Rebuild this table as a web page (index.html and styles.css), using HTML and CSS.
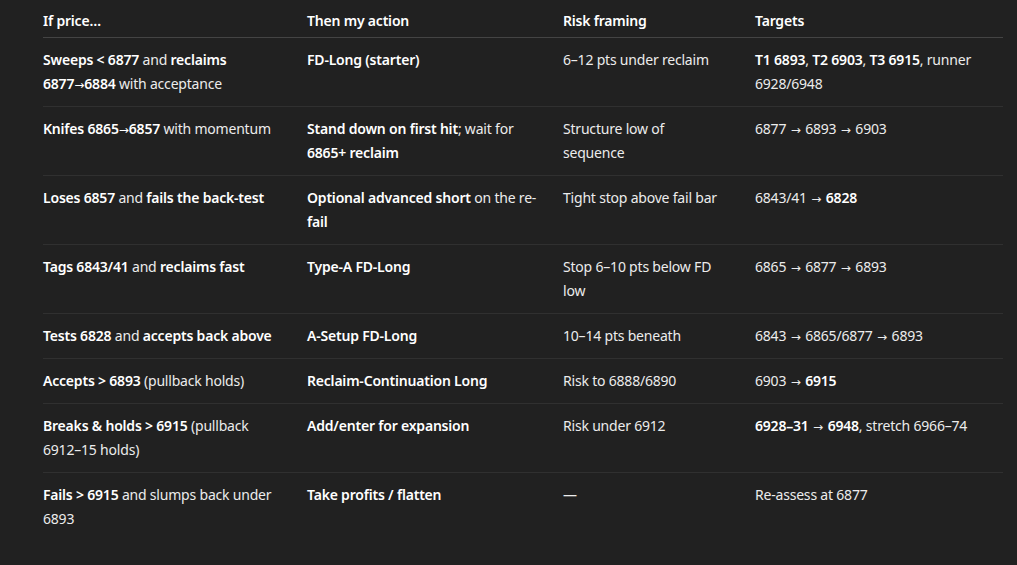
FILE: index.html
```html
<!DOCTYPE html>
<html lang="en">
<head>
<meta charset="utf-8">
<title>Price action plan</title>
<link rel="stylesheet" href="styles.css">
</head>
<body>
<div class="wrap">
<table class="plan">
<colgroup>
<col class="c1"><col class="c2"><col class="c3"><col class="c4">
</colgroup>
<thead>
<tr><th>If price…</th><th>Then my action</th><th>Risk framing</th><th>Targets</th></tr>
</thead>
<tbody>
<tr>
<td><strong>Sweeps &lt; 6877</strong> and <strong>reclaims 6877<span class="arr">→</span>6884</strong> with acceptance</td>
<td><strong>FD-Long (starter)</strong></td>
<td>6–12 pts under reclaim</td>
<td><strong>T1 6893</strong>, <strong>T2 6903</strong>, <strong>T3 6915</strong>, runner 6928/6948</td>
</tr>
<tr>
<td><strong>Knifes 6865<span class="arr">→</span>6857</strong> with momentum</td>
<td><strong>Stand down on first hit</strong>; wait for <strong>6865+ reclaim</strong></td>
<td>Structure low of sequence</td>
<td>6877 <span class="arr sp">→</span> 6893 <span class="arr sp">→</span> 6903</td>
</tr>
<tr>
<td><strong>Loses 6857</strong> and <strong>fails the back-test</strong></td>
<td><strong>Optional advanced short</strong> on the re-<strong>fail</strong></td>
<td>Tight stop above fail bar</td>
<td>6843/41 <span class="arr sp">→</span> <strong>6828</strong></td>
</tr>
<tr>
<td><strong>Tags 6843/41</strong> and <strong>reclaims fast</strong></td>
<td><strong>Type-A FD-Long</strong></td>
<td>Stop 6–10 pts below FD low</td>
<td>6865 <span class="arr sp">→</span> 6877 <span class="arr sp">→</span> 6893</td>
</tr>
<tr>
<td><strong>Tests 6828</strong> and <strong>accepts back above</strong></td>
<td><strong>A-Setup FD-Long</strong></td>
<td>10–14 pts beneath</td>
<td>6843 <span class="arr sp">→</span> 6865/6877 <span class="arr sp">→</span> 6893</td>
</tr>
<tr>
<td><strong>Accepts &gt; 6893</strong> (pullback holds)</td>
<td><strong>Reclaim-Continuation Long</strong></td>
<td>Risk to 6888/6890</td>
<td>6903 <span class="arr sp">→</span> <strong>6915</strong></td>
</tr>
<tr>
<td><strong>Breaks &amp; holds &gt; 6915</strong> (pullback 6912–15 holds)</td>
<td><strong>Add/enter for expansion</strong></td>
<td>Risk under 6912</td>
<td><strong>6928–31</strong> <span class="arr sp">→</span> <strong>6948</strong>, stretch 6966–74</td>
</tr>
<tr>
<td><strong>Fails &gt; 6915</strong> and slumps back under 6893</td>
<td><strong>Take profits / flatten</strong></td>
<td>—</td>
<td>Re-assess at 6877</td>
</tr>
</tbody>
</table>
</div>
</body>
</html>
```

FILE: styles.css
```css
html, body {
  margin: 0;
  padding: 0;
  background: #212121;
}
body {
  font-family: "Noto Sans", "Open Sans", sans-serif;
  font-size: 14px;
  line-height: 24px;
  color: #ececec;
  letter-spacing: -0.2px;
}
.wrap {
  padding: 0 14px 0 43px;
  width: 960px;
}
.plan {
  width: 960px;
  border-collapse: collapse;
  table-layout: fixed;
}
.c1 { width: 264px; }
.c2 { width: 256px; }
.c3 { width: 192px; }
.c4 { width: 248px; }
.plan th {
  text-align: left;
  font-weight: 600;
  color: #ffffff;
  padding: 9px 20px 4px 0;
  border-bottom: 1px solid #444444;
  vertical-align: bottom;
}
.plan td {
  padding: 10px 20px 10px 0;
  border-bottom: 1px solid #303030;
  vertical-align: top;
}
.plan td:nth-child(3) {
  padding-right: 30px;
}
.plan tbody tr:last-child td {
  border-bottom: none;
}
.plan strong {
  font-weight: 600;
  color: #ffffff;
}
.arr {
  font-family: "DejaVu Sans", sans-serif;
  font-weight: normal;
  font-size: 12px;
  line-height: 0;
  letter-spacing: 0;
}
.arr.sp {
  margin: 0 1px;
}
```
